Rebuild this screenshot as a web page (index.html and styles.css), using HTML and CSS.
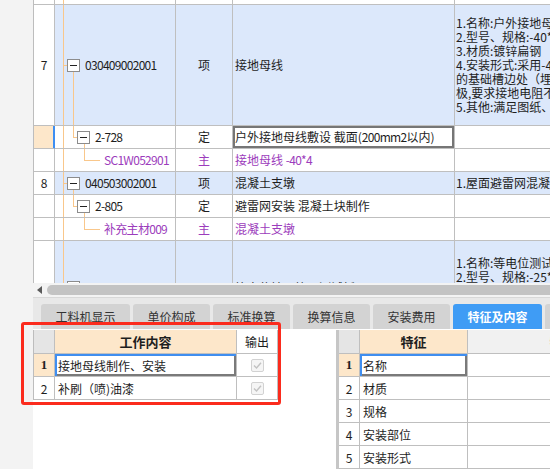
FILE: index.html
```html
<!DOCTYPE html>
<html lang="zh-CN">
<head>
<meta charset="utf-8">
<title>清单</title>
<link rel="stylesheet" href="styles.css">
</head>
<body>
<div class="app">
  <div class="strip"></div>
  <div class="main">
    <div class="top-view">
      <div class="tgrid">
        <div class="c num"></div><div class="c tree"></div><div class="c"></div><div class="c"></div><div class="c"></div>

        <div class="c num">7</div>
        <div class="c tree l1 kids blue"><span class="box"></span><span class="code">030409002001</span></div>
        <div class="c type blue">项</div>
        <div class="c name blue">接地母线</div>
        <div class="c desc blue"><div class="dtext">1.名称:户外接地母线<br>2.型号、规格:-40*4<br>3.材质:镀锌扁钢<br>4.安装形式:采用-40*4镀锌扁钢沿建筑物<br>的基础槽边处（埋深不小于0.7m）与接地<br>极,要求接地电阻不大于1Ω<br>5.其他:满足图纸、规范要求</div></div>

        <div class="c num sel"></div>
        <div class="c tree l2 kids"><span class="box"></span><span class="code">2-728</span></div>
        <div class="c type">定</div>
        <div class="c name edit"><span>户外接地母线敷设 截面(<span class="ascii">200mm2</span>以内)</span></div>
        <div class="c desc"></div>

        <div class="c num"></div>
        <div class="c tree l3"><span class="code pur">SC1W052901</span></div>
        <div class="c type pur">主</div>
        <div class="c name pur"><span>接地母线 <span class="ascii">-40*4</span></span></div>
        <div class="c desc"></div>

        <div class="c num">8</div>
        <div class="c tree l1 kids blue"><span class="box"></span><span class="code">040503002001</span></div>
        <div class="c type blue">项</div>
        <div class="c name blue">混凝土支墩</div>
        <div class="c desc blue"><div class="dtext">1.屋面避雷网混凝土支墩</div></div>

        <div class="c num"></div>
        <div class="c tree l2 kids"><span class="box"></span><span class="code">2-805</span></div>
        <div class="c type">定</div>
        <div class="c name">避雷网安装 混凝土块制作</div>
        <div class="c desc"></div>

        <div class="c num"></div>
        <div class="c tree l3"><span class="code pur">补充主材009</span></div>
        <div class="c type pur">主</div>
        <div class="c name pur">混凝土支墩</div>
        <div class="c desc"></div>

        <div class="c num">9</div>
        <div class="c tree l1 kids blue"><span class="box"></span><span class="code">030409008001</span></div>
        <div class="c type blue">项</div>
        <div class="c name blue">等电位端子箱、测试板</div>
        <div class="c desc blue top"><div class="dtext">1.名称:等电位测试端子箱<br>2.型号、规格:-25*4<br>3.安装形式:暗装<br>4.其他:满足图纸要求</div></div>
      </div>
    </div>

    <div class="hscroll"><span class="arrow"></span><span class="thumb"></span></div>

    <div class="tabs">
      <div class="tab wide">工料机显示</div>
      <div class="tab">单价构成</div>
      <div class="tab">标准换算</div>
      <div class="tab">换算信息</div>
      <div class="tab">安装费用</div>
      <div class="tab wide on">特征及内容</div>
      <div class="tab">说明信息</div>
    </div>

    <div class="bottom">
      <div class="lgrid">
        <div class="g hn"></div>
        <div class="g hp">工作内容</div>
        <div class="g hw">输出</div>

        <div class="g rn sel">1</div>
        <div class="g txt focus">接地母线制作、安装</div>
        <div class="g ck"><span class="chk"><svg width="11" height="11" viewBox="0 0 11 11"><polyline points="2,5.5 4.5,8 9,2.8" fill="none" stroke="#c2c2c2" stroke-width="1.4"/></svg></span></div>

        <div class="g rn">2</div>
        <div class="g txt">补刷（喷)油漆</div>
        <div class="g ck"><span class="chk"><svg width="11" height="11" viewBox="0 0 11 11"><polyline points="2,5.5 4.5,8 9,2.8" fill="none" stroke="#c2c2c2" stroke-width="1.4"/></svg></span></div>
      </div>

      <div class="rgrid">
        <div class="g hn"></div>
        <div class="g hp">特征</div>
        <div class="g hg">特征值</div>

        <div class="g rn sel">1</div>
        <div class="g txt focus">名称</div>
        <div class="g"></div>

        <div class="g rn">2</div>
        <div class="g txt">材质</div>
        <div class="g"></div>

        <div class="g rn">3</div>
        <div class="g txt">规格</div>
        <div class="g"></div>

        <div class="g rn">4</div>
        <div class="g txt">安装部位</div>
        <div class="g"></div>

        <div class="g rn">5</div>
        <div class="g txt">安装形式</div>
        <div class="g"></div>
      </div>
    </div>
  </div>
</div>
<div class="callout"></div>
</body>
</html>
```

FILE: styles.css
```css
* { box-sizing: border-box; }
html, body { margin: 0; padding: 0; }
body {
  width: 550px;
  height: 469px;
  overflow: hidden;
  position: relative;
  background: #f3f3f3;
  font-family: "Noto Sans CJK SC", "Noto Sans", sans-serif;
  font-size: 12px;
  color: #1e1e1e;
}
.app { display: flex; height: 469px; }
.strip { width: 33px; flex: none; background: #f3f3f3; }
.main { flex: 1; min-width: 0; display: flex; flex-direction: column; }

/* ---------- top tree grid ---------- */
.top-view { height: 283px; flex: none; overflow: hidden; background: #fff; }
.tgrid {
  display: grid;
  grid-template-columns: 21px 121px 57px 222px 260px;
  grid-template-rows: 5px 121px 23px 23px 23px 23px 23px 94px;
  border-left: 1px solid #bdbdbd;
  width: max-content;
}
.c {
  --bg: #fff;
  background-color: var(--bg);
  border-right: 1px solid #bfbfbf;
  border-bottom: 1px solid #bfbfbf;
  display: flex;
  align-items: center;
  white-space: nowrap;
  overflow: hidden;
  line-height: 14px;
}
.blue { --bg: #dce8fb; }
.num { justify-content: center; }
.num.sel { --bg: #fde7ca; border-right-color: #3d8ef2; box-shadow: inset -1px 0 0 #3d8ef2; }
.type { justify-content: center; }
.name { padding-left: 2px; }
.name.edit { box-shadow: inset 0 0 0 2px #767676; }
.desc { padding-left: 1px; }
.desc.top { align-items: flex-start; padding-top: 15px; }
.pur { color: #9c3cbc; }
.code, .ascii { letter-spacing: -0.7px; }

.tree {
  background: linear-gradient(#f9c78b, #f9c78b) 8px 0 / 1px 100% no-repeat, var(--bg);
}
.tree.l1 {
  padding-left: 12px;
  background:
    linear-gradient(#f9c78b, #f9c78b) 8px 0 / 1px 100% no-repeat,
    linear-gradient(#f9c78b, #f9c78b) 8px 50% / 4px 1px no-repeat,
    var(--bg);
}
.tree.l1.kids {
  background:
    linear-gradient(#f9c78b, #f9c78b) 8px 0 / 1px 100% no-repeat,
    linear-gradient(#f9c78b, #f9c78b) 8px 50% / 4px 1px no-repeat,
    linear-gradient(#f9c78b, #f9c78b) 18px 100% / 1px 50% no-repeat,
    var(--bg);
}
.tree.l2 {
  padding-left: 22px;
  background:
    linear-gradient(#f9c78b, #f9c78b) 8px 0 / 1px 100% no-repeat,
    linear-gradient(#f9c78b, #f9c78b) 18px 0 / 1px 50% no-repeat,
    linear-gradient(#f9c78b, #f9c78b) 18px 50% / 4px 1px no-repeat,
    var(--bg);
}
.tree.l2.kids {
  background:
    linear-gradient(#f9c78b, #f9c78b) 8px 0 / 1px 100% no-repeat,
    linear-gradient(#f9c78b, #f9c78b) 18px 0 / 1px 50% no-repeat,
    linear-gradient(#f9c78b, #f9c78b) 18px 50% / 4px 1px no-repeat,
    linear-gradient(#f9c78b, #f9c78b) 29px 100% / 1px 50% no-repeat,
    var(--bg);
}
.tree.l3 {
  padding-left: 49px;
  background:
    linear-gradient(#f9c78b, #f9c78b) 8px 0 / 1px 100% no-repeat,
    linear-gradient(#f9c78b, #f9c78b) 29px 0 / 1px 50% no-repeat,
    linear-gradient(#f9c78b, #f9c78b) 29px 50% / 16px 1px no-repeat,
    var(--bg);
}
.box {
  flex: none;
  width: 13px;
  height: 13px;
  border: 1px solid #8c8c8c;
  background: linear-gradient(#222, #222) center / 7px 1px no-repeat, #fff;
}
.box + .code { margin-left: 5px; }

/* ---------- horizontal scrollbar ---------- */
.hscroll {
  height: 15px;
  flex: none;
  display: flex;
  align-items: center;
  padding-left: 4px;
  background: #f3f3f3;
  border-bottom: 1px solid #d8d8d8;
  overflow: hidden;
}
.arrow {
  flex: none;
  width: 0;
  height: 0;
  border-top: 4px solid transparent;
  border-bottom: 4px solid transparent;
  border-right: 5px solid #5a5a5a;
}
.thumb {
  flex: none;
  width: 600px;
  height: 10px;
  margin-left: 5px;
  border-radius: 5px;
  background: #c3c3c3;
}

/* ---------- tabs ---------- */
.tabs {
  height: 31px;
  flex: none;
  display: flex;
  align-items: flex-end;
  gap: 3px;
  padding-left: 8px;
  background: #e8e8e8;
  overflow: hidden;
}
.tab {
  flex: none;
  width: 77px;
  height: 25px;
  border-radius: 3px 3px 0 0;
  background: #d3d3d3;
  color: #333;
  display: flex;
  align-items: center;
  justify-content: center;
  white-space: nowrap;
}
.tab.wide { width: 89px; }
.tab.on { background: #3f9cf5; color: #fff; font-weight: bold; }

/* ---------- bottom panel ---------- */
.bottom {
  flex: 1;
  min-height: 0;
  display: flex;
  align-items: flex-start;
  padding-top: 1px;
  background: #fff;
  overflow: hidden;
}
.lgrid {
  flex: none;
  display: grid;
  grid-template-columns: 21px 182px 41px;
  grid-template-rows: 24px 23px 23px;
  border-left: 1px solid #bdbdbd;
}
.rgrid {
  flex: none;
  margin-left: 58px;
  display: grid;
  grid-template-columns: 21px 108px 200px;
  grid-template-rows: 24px 23px 23px 23px 23px 23px;
  border-left: 3px solid #c6c6c6;
}
.g {
  border-right: 1px solid #bfbfbf;
  border-bottom: 1px solid #bfbfbf;
  background: #fff;
  display: flex;
  align-items: center;
  white-space: nowrap;
  overflow: hidden;
}
.hn { background: #e5e5e5; }
.hp { background: #fde7ca; font-weight: bold; justify-content: center; font-size: 13px; }
.hw { justify-content: center; }
.hg { background: #f1f1f1; justify-content: center; }
.rn { justify-content: center; }
.rn.sel { background: #fde7ca; font-weight: bold; font-family: "Liberation Serif", serif; font-size: 13px; }
.txt { padding-left: 3px; }
.focus { box-shadow: inset 2px 2px 0 #3f8ef0, inset -2px -2px 0 #7a7a7a; }
.ck { justify-content: center; }
.chk {
  width: 13px;
  height: 13px;
  border: 1px solid #d2d2d2;
  border-radius: 2px;
  background: #f5f5f5;
  display: flex;
  align-items: center;
  justify-content: center;
}
.chk svg { display: block; }

/* ---------- annotation ---------- */
.callout {
  position: absolute;
  left: 21px;
  top: 322px;
  width: 260px;
  height: 83px;
  border: 3px solid #fb2b1d;
  border-radius: 3px;
}
```
